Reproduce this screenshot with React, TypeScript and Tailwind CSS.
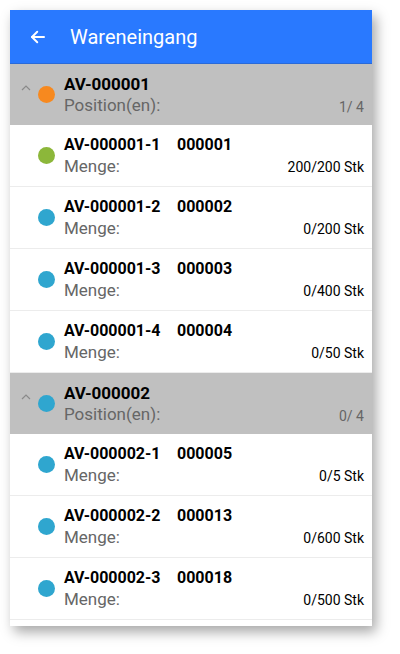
import React from "react";

type Item = { id: string; nr: string; menge: string; color: string };
type Group = { id: string; count: string; color: string; items: Item[] };

const GREEN = "bg-[#8cb73a]";
const BLUE = "bg-[#2fa6cf]";

const groups: Group[] = [
  {
    id: "AV-000001",
    count: "1/ 4",
    color: "bg-[#f7891f]",
    items: [
      { id: "AV-000001-1", nr: "000001", menge: "200/200 Stk", color: GREEN },
      { id: "AV-000001-2", nr: "000002", menge: "0/200 Stk", color: BLUE },
      { id: "AV-000001-3", nr: "000003", menge: "0/400 Stk", color: BLUE },
      { id: "AV-000001-4", nr: "000004", menge: "0/50 Stk", color: BLUE },
    ],
  },
  {
    id: "AV-000002",
    count: "0/ 4",
    color: BLUE,
    items: [
      { id: "AV-000002-1", nr: "000005", menge: "0/5 Stk", color: BLUE },
      { id: "AV-000002-2", nr: "000013", menge: "0/600 Stk", color: BLUE },
      { id: "AV-000002-3", nr: "000018", menge: "0/500 Stk", color: BLUE },
    ],
  },
];

function GroupHeader({ g }: { g: Group }) {
  return (
    <div className="h-[61px] bg-[#c0c0c0] flex items-center pl-[11px] pr-[8px]">
      <svg width="10" height="10" viewBox="0 0 10 10" className="mb-[12px]">
        <polyline points="1,6 5,2 9,6" fill="none" stroke="#8a8a8a" strokeWidth="1.2" />
      </svg>
      <div className={`ml-[7px] w-[17px] h-[17px] rounded-full ${g.color}`} />
      <div className="ml-[9px] flex-1 flex flex-col">
        <div className="text-[17px] leading-[21px] font-bold text-black">{g.id}</div>
        <div className="text-[17px] leading-[21px] text-[#666]">Position(en):</div>
      </div>
      <div className="self-end mb-[10px] text-[14px] leading-[16px] text-[#666]">{g.count}</div>
    </div>
  );
}

function Row({ it }: { it: Item }) {
  return (
    <div className="h-[62px] flex items-center pl-[28px] pr-[8px] border-b border-[#ececec] bg-white">
      <div className={`w-[17px] h-[17px] rounded-full ${it.color}`} />
      <div className="ml-[9px] flex-1 flex flex-col">
        <div className="text-[16px] leading-[21px] font-bold text-black flex">
          <span className="w-[113px]">{it.id}</span>
          <span>{it.nr}</span>
        </div>
        <div className="flex justify-between items-baseline leading-[22px]">
          <span className="text-[17px] text-[#666]">Menge:</span>
          <span className="text-[14px] text-black">{it.menge}</span>
        </div>
      </div>
    </div>
  );
}

export default function App() {
  return (
    <div
      className="w-[400px] h-[654px] bg-white pt-[10px] pl-[10px]"
      style={{ fontFamily: "Roboto, 'Liberation Sans', sans-serif" }}
    >
      <div className="w-[362px] bg-white shadow-[4px_6px_12px_rgba(0,0,0,0.35)] pb-[6px]">
        <div className="h-[54px] bg-[#2979ff] flex items-center pl-[19px] border-b border-[#2a6ad8]">
          <svg width="18" height="18" viewBox="0 0 24 24" fill="none" stroke="white" strokeWidth="2.6" strokeLinecap="round" strokeLinejoin="round">
            <path d="M20 12H4" />
            <path d="M11 5l-7 7 7 7" />
          </svg>
          <span className="ml-[23px] text-[20px] text-white">Wareneingang</span>
        </div>
        {groups.map((g) => (
          <div key={g.id}>
            <GroupHeader g={g} />
            {g.items.map((it) => (
              <Row key={it.id} it={it} />
            ))}
          </div>
        ))}
      </div>
    </div>
  );
}
